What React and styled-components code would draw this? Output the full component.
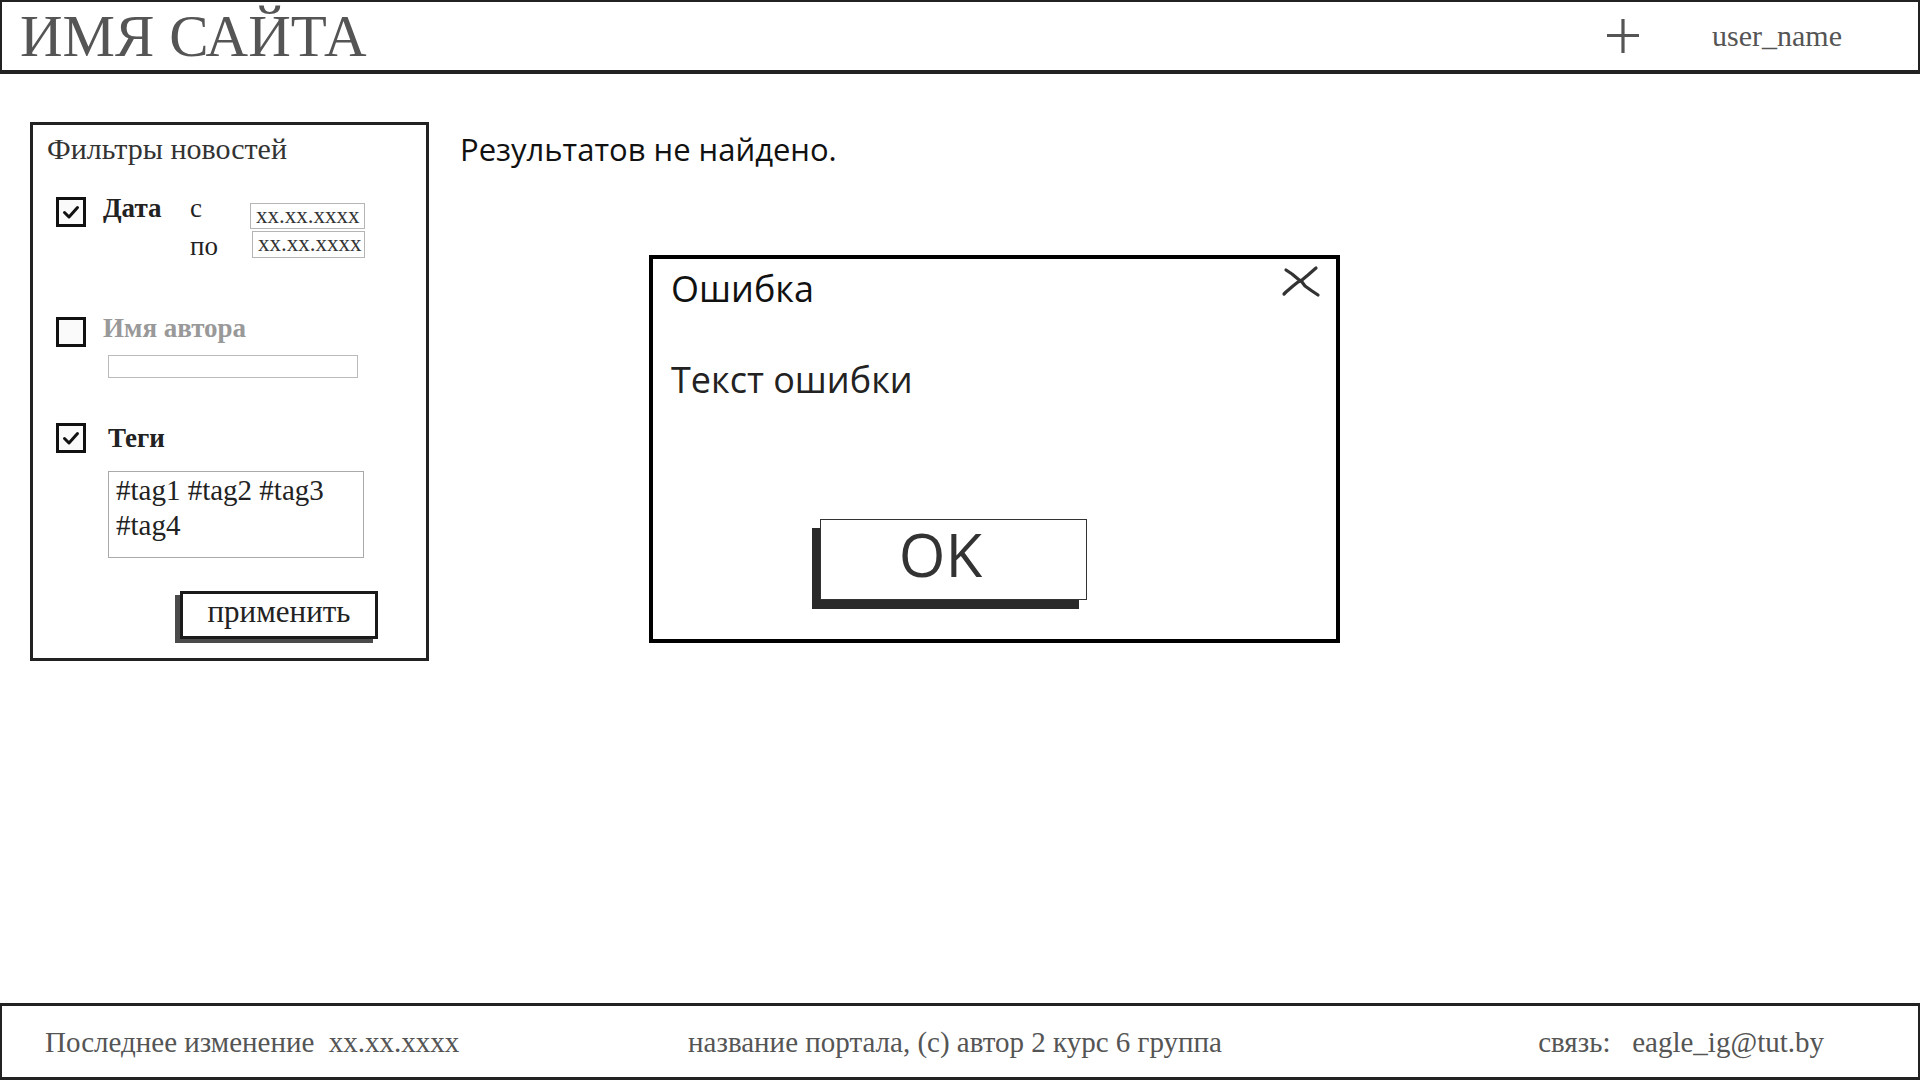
import React from 'react'
import styled, { createGlobalStyle } from 'styled-components'

const GlobalStyle = createGlobalStyle`
    html, body {
        margin: 0;
        padding: 0;
        background: #fff;
    }
    #root {
        min-height: 100vh;
        display: flex;
        flex-direction: column;
    }
    * {
        box-sizing: border-box;
    }
`

const serif = `"Liberation Serif", "Times New Roman", serif`
const sans = `"Open Sans", "Noto Sans", sans-serif`

const PlusIcon = () => (
    <svg width="34" height="36" viewBox="0 0 34 36">
        <path d="M17 1 V35 M1 17.5 H33" stroke="#555" strokeWidth="3.2" fill="none" />
    </svg>
)

const CloseIcon = () => (
    <svg width="40" height="34" viewBox="0 0 40 34">
        <path
            d="M35 3 L27 10 L21 15 L17 17 L12 21 L5 27 L3 29"
            stroke="#333" strokeWidth="3.2" fill="none" strokeLinecap="round" strokeLinejoin="round"
        />
        <path
            d="M5 5 L11 9 L17 14 L21 17 L24 21 L31 26 L37 30"
            stroke="#333" strokeWidth="3.2" fill="none" strokeLinecap="round" strokeLinejoin="round"
        />
    </svg>
)

const CheckMark = () => (
    <svg width="24" height="24" viewBox="0 0 24 24">
        <path d="M5.5 12.5 L10 17 L18.5 7.5" stroke="#111" strokeWidth="3" fill="none" strokeLinecap="round" strokeLinejoin="round" />
    </svg>
)

const App = () => {
    return (
        <>
            <GlobalStyle />
            <Header>
                <SiteName>ИМЯ САЙТА</SiteName>
                <HeaderRight>
                    <PlusIcon />
                    <UserName>user_name</UserName>
                </HeaderRight>
            </Header>

            <Main>
                <FilterPanel>
                    <PanelTitle>Фильтры новостей</PanelTitle>

                    <DateRow>
                        <Checkbox><CheckMark /></Checkbox>
                        <FilterLabel $width="87px">Дата</FilterLabel>
                        <RangeLabels>
                            <span>с</span>
                            <span>по</span>
                        </RangeLabels>
                        <RangeInputs>
                            <DateInput>xx.xx.xxxx</DateInput>
                            <DateInput $shift>xx.xx.xxxx</DateInput>
                        </RangeInputs>
                    </DateRow>

                    <FilterRow $top="52px">
                        <Checkbox />
                        <FilterLabel $muted>Имя автора</FilterLabel>
                    </FilterRow>
                    <AuthorInput />

                    <FilterRow $top="45px">
                        <Checkbox><CheckMark /></Checkbox>
                        <FilterLabel $indent="22px" $drop="4px">Теги</FilterLabel>
                    </FilterRow>
                    <TagsBox>#tag1 #tag2 #tag3 #tag4</TagsBox>

                    <ApplyButton>применить</ApplyButton>
                </FilterPanel>

                <NoResults>Результатов не найдено.</NoResults>

                <Dialog>
                    <DialogTitle>Ошибка</DialogTitle>
                    <CloseButton><CloseIcon /></CloseButton>
                    <DialogText>Текст ошибки</DialogText>
                    <OkButton>OK</OkButton>
                </Dialog>
            </Main>

            <Footer>
                <FooterText>Последнее изменение&nbsp;&nbsp;xx.xx.xxxx</FooterText>
                <FooterText $align="center">название портала, (с) автор 2 курс 6 группа</FooterText>
                <FooterText $align="end" $gap="41px">связь:&nbsp;&nbsp;&nbsp;eagle_ig@tut.by</FooterText>
            </Footer>
        </>
    )
}

export default App

const Header = styled.header`
    height: 74px;
    display: flex;
    align-items: center;
    justify-content: space-between;
    padding: 0 76px 0 18px;
    border: 2px solid #222;
    border-bottom-width: 4px;
`
const SiteName = styled.h1`
    margin: 0;
    font-family: ${serif};
    font-weight: 400;
    font-size: 59px;
    line-height: 56px;
    color: #555;
`
const HeaderRight = styled.div`
    display: flex;
    align-items: center;
    gap: 72px;
`
const UserName = styled.span`
    font-family: ${serif};
    font-size: 30px;
    line-height: 30px;
    color: #555;
`
const Main = styled.main`
    position: relative;
    flex: 1;
    display: flex;
    align-items: flex-start;
    gap: 31px;
    padding: 48px 0 0 30px;
`
const FilterPanel = styled.section`
    width: 399px;
    height: 539px;
    border: 3px solid #222;
    padding: 8px 0 0 14px;
    display: flex;
    flex-direction: column;
    font-family: ${serif};
    color: #222;
`
const PanelTitle = styled.div`
    font-size: 30px;
    line-height: 32px;
    color: #333;
`
const DateRow = styled.div`
    display: flex;
    align-items: flex-start;
    margin-top: 32px;
    padding-left: 9px;
`
const FilterRow = styled.div`
    display: flex;
    align-items: flex-start;
    margin-top: ${p => p.$top};
    padding-left: 9px;
`
const Checkbox = styled.div`
    width: 30px;
    height: 30px;
    flex-shrink: 0;
    border: 3px solid #111;
    background: #fafafa;
    display: flex;
    align-items: center;
    justify-content: center;
`
const FilterLabel = styled.span`
    width: ${p => p.$width || 'auto'};
    margin-left: ${p => p.$indent || '17px'};
    margin-top: ${p => p.$drop || '0px'};
    font-size: 27px;
    line-height: 22px;
    font-weight: 700;
    color: ${p => (p.$muted ? '#999' : '#222')};
`
const RangeLabels = styled.div`
    width: 60px;
    margin-top: -8px;
    display: flex;
    flex-direction: column;
    font-size: 27px;
    line-height: 38px;
    color: #222;
`
const RangeInputs = styled.div`
    margin-top: 6px;
    display: flex;
    flex-direction: column;
    gap: 2px;
`
const DateInput = styled.div`
    width: ${p => (p.$shift ? '113px' : '115px')};
    margin-left: ${p => (p.$shift ? '2px' : '0')};
    height: ${p => (p.$shift ? '27px' : '26px')};
    border: 1px solid #b5b5b5;
    padding-left: 5px;
    font-size: 23px;
    line-height: 23px;
    color: #333;
    white-space: nowrap;
    overflow: hidden;
`
const AuthorInput = styled.div`
    width: 250px;
    height: 23px;
    margin: 8px 0 0 61px;
    border: 1px solid #bbb;
`
const TagsBox = styled.div`
    width: 256px;
    height: 87px;
    margin: 18px 0 0 61px;
    border: 1px solid #aaa;
    padding: 1px 7px 0;
    font-size: 29px;
    line-height: 35px;
    color: #222;
`
const ApplyButton = styled.button`
    align-self: flex-start;
    width: 198px;
    height: 48px;
    margin: 33px 0 0 133px;
    border: 3px solid #1a1a1a;
    background: #fff;
    box-shadow: -5px 4px 0 #4a4a4a;
    font-family: ${serif};
    font-size: 31px;
    line-height: 32px;
    color: #222;
    padding: 0 0 6px;
    cursor: pointer;
`
const NoResults = styled.p`
    margin: 8px 0 0;
    font-family: ${sans};
    font-size: 31px;
    line-height: 38px;
    color: #111;
`
const Dialog = styled.div`
    position: absolute;
    left: 649px;
    top: 181px;
    width: 691px;
    height: 388px;
    border: 4px solid #000;
    background: #fff;
    padding: 8px 0 0 18px;
    font-family: ${sans};
    color: #111;
`
const DialogTitle = styled.div`
    font-size: 36px;
    line-height: 44px;
`
const CloseButton = styled.div`
    position: absolute;
    top: 6px;
    right: 15px;
    display: flex;
`
const DialogText = styled.div`
    margin-top: 47px;
    font-size: 36px;
    line-height: 44px;
    color: #222;
`
const OkButton = styled.div`
    width: 267px;
    height: 81px;
    margin: 117px 0 0 149px;
    border: 1px solid #333;
    background: #fff;
    box-shadow: -8px 9px 0 #2a2a2a;
    display: flex;
    align-items: center;
    justify-content: center;
    padding: 0 26px 12px 0;
    font-size: 60px;
    line-height: 60px;
    color: #333;
`
const Footer = styled.footer`
    height: 77px;
    display: grid;
    grid-template-columns: 1fr auto 1fr;
    align-items: center;
    padding: 0 53px 0 43px;
    border: 2px solid #222;
    border-top-width: 3px;
    border-bottom-width: 3px;
`
const FooterText = styled.span`
    justify-self: ${p => p.$align || 'start'};
    margin-right: ${p => p.$gap || '0px'};
    font-family: ${serif};
    font-size: 29px;
    line-height: 32px;
    color: #555;
    white-space: nowrap;
`
